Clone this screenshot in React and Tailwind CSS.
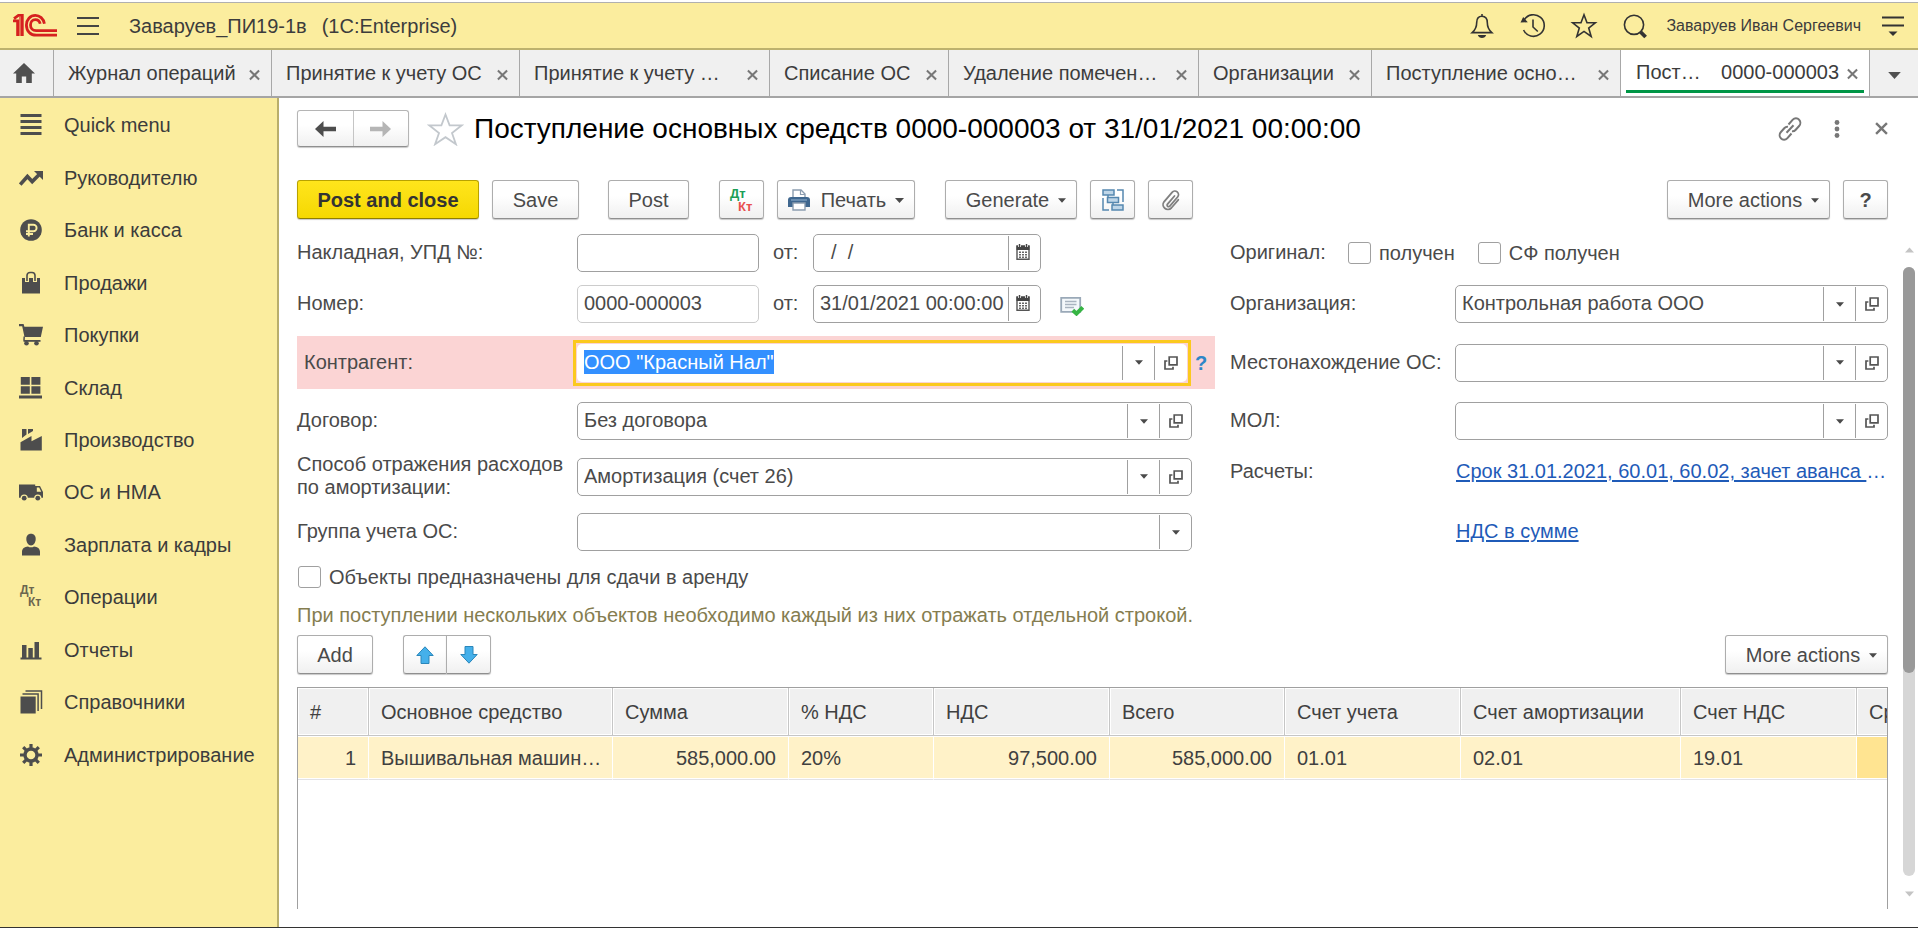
import { useEffect, useRef } from "react";

/* ---------- small shared icons ---------- */

function CloseIcon({ className = "h-3 w-[11px] text-[#777777]" }) {
  return (
    <svg viewBox="0 0 12 12" className={className} fill="none" stroke="currentColor" strokeWidth="2.2" aria-hidden="true">
      <path d="M1 1 11 11M11 1 1 11" />
    </svg>
  );
}

function Caret({ className = "h-[5px] w-[9px]" }) {
  return (
    <svg viewBox="0 0 9 5" className={className} fill="currentColor" aria-hidden="true">
      <path d="M0 0h9L4.5 5z" />
    </svg>
  );
}

function OpenIcon() {
  return (
    <svg viewBox="0 0 14 14" className="h-[14px] w-[14px]" fill="none" stroke="#555" strokeWidth="1.7" aria-hidden="true">
      <path d="M5.2 1h7.8v7.8H5.2z" />
      <path d="M3.4 5H1v8h8v-2.2" />
    </svg>
  );
}

function CalendarIcon() {
  return (
    <svg viewBox="0 0 14 16" className="h-4 w-[14px]" aria-hidden="true">
      <path d="M1 2h12v13.2H1z" fill="#fff" stroke="#555" strokeWidth="1.4" />
      <path d="M.5 1.8h13V6H.5z" fill="#444" />
      <path d="M3.5 0v3M10.5 0v3" stroke="#fff" strokeWidth="3" />
      <path d="M3.5 0v3M10.5 0v3" stroke="#444" strokeWidth="1.5" />
      <g fill="#666">
        <path d="M3 7.5h2v1.6H3zM6 7.5h2v1.6H6zM9 7.5h2v1.6H9zM3 10h2v1.6H3zM6 10h2v1.6H6zM9 10h2v1.6H9zM3 12.5h2V14H3zM6 12.5h2V14H6zM9 12.5h2V14H9z" />
      </g>
    </svg>
  );
}

function Logo() {
  return (
    <svg viewBox="0 0 44 23" className="h-[23px] w-11" fill="none" stroke="#d6201f" strokeWidth="2.8" role="img" aria-label="1C">
      <path d="M0 6.9h4.6V22M1 4.6 5.4 1.4h3.9V22" />
      <path d="M7 3v19" strokeWidth="1.2" />
      <path d="M31.4 9.8C30.6 4.6 26.6 1.4 22.4 1.4c-5.2 0-9 4.2-9 9.6 0 6.2 4.3 10.200 9.800 10.200H44" />
      <path d="M27.2 9.8c-.6-2.6-2.6-4.2-4.9-4.2-2.8 0-4.8 2.4-4.8 5.5 0 3.300 2.200 5.600 5.600 5.600H44" />
    </svg>
  );
}

/* ---------- sidebar icons ---------- */

const sideIcons = {
  menu: <path d="M1.5 1h21v3h-21zM1.5 7h21v3h-21zM1.5 13h21v3h-21zM1.5 19h21v3h-21z" />,
  trend: (
    <>
      <path d="M1.2 18.5 8.4 10.5 13.2 15.6 20.5 8.2" fill="none" stroke="currentColor" strokeWidth="3.6" />
      <path d="M15 5h9v9z" />
    </>
  ),
  ruble: (
    <>
      <circle cx="12" cy="12" r="10.8" />
      <path d="M9.8 18.5V6.8h4.6a3 3 0 0 1 0 6.4H7M7 16h7" fill="none" stroke="#fbed9e" strokeWidth="1.9" />
    </>
  ),
  bag: (
    <>
      <path d="M3 7h18v15.500H3z" />
      <path d="M8 11V4.500a3 3 0 0 1 3-3h2a3 3 0 0 1 3 3V11" fill="none" stroke="#fbed9e" strokeWidth="4" />
      <path d="M8 10V4.500a3 3 0 0 1 3-3h2a3 3 0 0 1 3 3V10" fill="none" stroke="currentColor" strokeWidth="1.6" />
    </>
  ),
  cart: (
    <>
      <path d="M0 1h4.600l.8 2.800H24L21.800 14H5.500L3.200 3.300H0z" />
      <path d="M4.500 17h17v1.800h-17z" />
      <path d="M5.200 13.500 5 17.500" stroke="currentColor" strokeWidth="1.500" />
      <circle cx="7.500" cy="20.300" r="2.300" />
      <circle cx="17.500" cy="20.300" r="2.300" />
    </>
  ),
  store: <path d="M1.800 1h9v7.800h-9zM12.400 1h9v7.800h-9zM1.800 10.300h9V17.800h-9zM12.400 10.300h9V17.800h-9zM0 19.500h23v3H0z" />,
  factory: (
    <path d="M1.500 22.500V14.200L12.500 8V13.200L22.800 8V22.500zM3 1h4.500v5.500L3 10zM9 1h5v2l-5 3z" />
  ),
  truck: (
    <>
      <path d="M0 4.500h16.200V17.800H0zM16.200 6h4.800L24 12v5.800h-7.800z" />
      <path d="M17.800 7.500h2.400l2 4.200h-4.400z" fill="#fbed9e" />
      <circle cx="5.200" cy="18" r="3.600" fill="#fbed9e" />
      <circle cx="18.800" cy="18" r="3.600" fill="#fbed9e" />
      <circle cx="5.200" cy="18.200" r="2.400" />
      <circle cx="18.800" cy="18.200" r="2.400" />
    </>
  ),
  person: (
    <>
      <path d="M12 .8c3 0 4.700 2.200 4.700 5.200S14.700 12.500 12 12.500 7.300 9 7.300 6 9 .8 12 .8z" />
      <path d="M3 22.500v-3.700c0-3.200 2.500-5.100 6-5.400 1.800 1.200 4.200 1.200 6 0 3.500.3 6 2.200 6 5.400v3.700z" />
    </>
  ),
  dtkt: (
    <g fontFamily="Liberation Sans, Arial, sans-serif" fontWeight="bold" fontSize="12" fill="#6b664f">
      <text x="1" y="9">Дт</text>
      <text x="9" y="21">Кт</text>
    </g>
  ),
  chart: <path d="M1.500 19.500h21v2h-21zM3 7h4.500v13H3zM9.300 10h4.500v10H9.300zM15.500 4h4.500v16h-4.500z" />,
  books: (
    <>
      <path d="M1.500 6.500h15.200V23.500H1.500z" />
      <path d="M3.500 4h15.600v17M6.500 1h16v18" fill="none" stroke="currentColor" strokeWidth="1.500" />
    </>
  ),
  gear: (
    <>
      <circle cx="12" cy="12" r="6" fill="none" stroke="currentColor" strokeWidth="3.400" />
      <path
        d="M12 1v4.500M12 18.500V23M1 12h4.500M18.500 12H23M4.200 4.200l3.200 3.200M16.600 16.600l3.200 3.200M19.800 4.200l-3.200 3.200M7.400 16.600l-3.200 3.200"
        stroke="currentColor"
        strokeWidth="3.200"
      />
    </>
  ),
};

const sections = [
  ["menu", "Quick menu"],
  ["trend", "Руководителю"],
  ["ruble", "Банк и касса"],
  ["bag", "Продажи"],
  ["cart", "Покупки"],
  ["store", "Склад"],
  ["factory", "Производство"],
  ["truck", "ОС и НМА"],
  ["person", "Зарплата и кадры"],
  ["dtkt", "Операции"],
  ["chart", "Отчеты"],
  ["books", "Справочники"],
  ["gear", "Администрирование"],
];

const tabs = [
  ["Журнал операций", "w-[218px]"],
  ["Принятие к учету ОС", "w-[248px]"],
  ["Принятие к учету …", "w-[250px]"],
  ["Списание ОС", "w-[179px]"],
  ["Удаление помечен…", "w-[250px]"],
  ["Организации", "w-[173px]"],
  ["Поступление осно…", "w-[249px]"],
];

/* ---------- header ---------- */

function HeaderButton({ label, children }) {
  return (
    <button type="button" aria-label={label} className="flex h-7 w-7 items-center justify-center text-[#333333]">
      {children}
    </button>
  );
}

function Header() {
  const line = { fill: "none", stroke: "currentColor", strokeWidth: 1.6, className: "h-7 w-7", viewBox: "0 0 28 28" };
  return (
    <header className="flex h-12 items-center border-t border-b-2 border-t-[#b0b0b0] border-b-[#bdb26d] bg-[#fbed9e] pr-[14px] pl-[13px]">
      <Logo />
      <button type="button" aria-label="Menu" className="ml-5 text-[#444444]">
        <svg viewBox="0 0 22 18" className="h-[18px] w-[22px]" stroke="currentColor" strokeWidth="2" aria-hidden="true">
          <path d="M0 1h22M0 9h22M0 17h22" />
        </svg>
      </button>
      <h1 className="ml-[30px] flex gap-[15px] whitespace-nowrap">
        <span>Заваруев_ПИ19-1в</span>
        <span>(1C:Enterprise)</span>
      </h1>
      <div className="ml-auto flex items-center gap-[23px]">
        <HeaderButton label="Notifications">
          <svg {...line}>
            <path d="M14 4.200c-3.700 0-5.300 2.900-5.300 6.300 0 5.200-1.600 7.600-4.500 10.100h19.600c-2.900-2.500-4.500-4.900-4.500-10.100 0-3.400-1.600-6.300-5.300-6.300zM14 2v2.200" />
            <path d="M9.800 23h8.400c-.6 1.900-2.200 3-4.200 3s-3.600-1.100-4.200-3z" fill="currentColor" stroke="none" />
          </svg>
        </HeaderButton>
        <HeaderButton label="History">
          <svg {...line}>
            <path d="M5 8.300A10.800 10.800 0 1 1 4.600 18" />
            <path d="M14 7.500V15l4.800 4.500" />
            <path d="M1.500 10.500 4.200 5l4.600 5.300z" fill="currentColor" stroke="none" />
          </svg>
        </HeaderButton>
        <HeaderButton label="Favorites">
          <svg {...line}>
            <path d="m14 2.800 3 8h8.300l-6.600 5.200 2.500 8.500-7.200-5.100-7.200 5.100L9.300 16l-6.600-5.200H11z" />
          </svg>
        </HeaderButton>
        <HeaderButton label="Search">
          <svg {...line}>
            <circle cx="13" cy="12.800" r="9.600" />
            <path d="m19.600 20 5 5" strokeWidth="3.800" />
          </svg>
        </HeaderButton>
      </div>
      <span className="ml-[17px] text-base whitespace-nowrap">Заваруев Иван Сергеевич</span>
      <button type="button" aria-label="Service menu" className="ml-[21px] text-[#333333]">
        <svg viewBox="0 0 22 20" className="h-5 w-[22px]" aria-hidden="true">
          <path d="M0 1.500h22M0 9.500h22" stroke="currentColor" strokeWidth="2" />
          <path d="M6.500 15.500h9L11 20z" fill="currentColor" />
        </svg>
      </button>
    </header>
  );
}

function TabBar() {
  return (
    <nav className="flex h-12 border-b-2 border-[#a5a5a5] bg-[#f0f0f0] text-[#3c3c3c]">
      <button type="button" aria-label="Home" className="flex w-[54px] shrink-0 items-center border-r border-[#a8a8a8] pl-[13px]">
        <svg viewBox="0 0 22 20" className="h-5 w-[22px]" fill="#505050" aria-hidden="true">
          <path d="M11 0 22 10.500h-3.200V20h-5.600v-6.500H8.800V20H3.200v-9.500H0z" />
        </svg>
      </button>
      {tabs.map(([label, width], i) => (
        <div key={i} className={`flex items-center justify-between border-r border-[#a8a8a8] pr-[11px] pl-[14px] ${width}`}>
          <button type="button" className="truncate">{label}</button>
          <button type="button" aria-label="Close tab" className="mt-[3px] shrink-0"><CloseIcon /></button>
        </div>
      ))}
      <div className="flex w-[249px] flex-col border-r border-[#a8a8a8] bg-white px-[5px]">
        <div className="flex flex-1 items-center pt-1 pr-[6px] pl-[10px]">
          <button type="button" className="flex flex-1 justify-between pr-2 whitespace-nowrap">
            <span>Пост…</span>
            <span>0000-000003</span>
          </button>
          <button type="button" aria-label="Close tab" className="mt-[3px]"><CloseIcon /></button>
        </div>
        <div className="mb-[3px] h-[3px] bg-[#009646]" />
      </div>
      <button type="button" aria-label="All tabs" className="flex flex-1 items-center justify-center pt-1 text-[#505050]">
        <Caret className="h-[7px] w-[13px]" />
      </button>
    </nav>
  );
}

function Sidebar() {
  return (
    <aside className="w-[279px] shrink-0 border-r-2 border-[#b9ae6b] bg-[#fbed9e] pt-px">
      <ul className="grid h-[682px] auto-rows-fr">
        {sections.map(([icon, label]) => (
          <li key={label} className="flex">
            <a href="#" className="flex flex-1 items-center gap-[21px] pl-[19px]">
              <svg viewBox="0 0 24 24" className="h-6 w-6 text-[#4d4d4d]" fill="currentColor" aria-hidden="true">
                {sideIcons[icon]}
              </svg>
              {label}
            </a>
          </li>
        ))}
      </ul>
    </aside>
  );
}

/* ---------- form pieces ---------- */

function Button({ className = "", children, ...rest }) {
  return (
    <button
      type="button"
      className={`flex h-[39px] items-center justify-center rounded-[3px] border border-[#adadad] border-b-[#8f8f8f] bg-linear-to-b from-white from-40% to-[#f0f0f0] whitespace-nowrap shadow-[0_1px_1px_#c8c8c8] ${className}`}
      {...rest}
    >
      {children}
    </button>
  );
}

function Field({ id, value = "", lookup, dropdown, calendar, bare, muted, inputRef, className = "" }) {
  const frame = bare ? "border-transparent" : muted ? "border-[#cccccc]" : "border-[#a0a0a0]";
  return (
    <div className={`flex h-[38px] rounded-[5px] border bg-white ${frame} ${className}`}>
      <input
        id={id}
        ref={inputRef}
        defaultValue={value}
        readOnly={muted}
        className="w-0 min-w-0 flex-1 rounded-[5px] bg-transparent pb-[2px] pl-[6px] whitespace-pre outline-none selection:bg-[#3390ff] selection:text-white"
      />
      {dropdown && (
        <button type="button" aria-label="Choose" className="my-px flex w-8 items-center justify-center border-l border-[#a0a0a0]">
          <Caret className="h-[5px] w-2" />
        </button>
      )}
      {lookup && (
        <button type="button" aria-label="Open" className="my-px flex w-8 items-center justify-center border-l border-[#a0a0a0]">
          <OpenIcon />
        </button>
      )}
      {calendar && (
        <button type="button" aria-label="Calendar" className="my-px flex w-8 items-center justify-center border-l border-[#a0a0a0] pr-[3px] pb-[2px]">
          <CalendarIcon />
        </button>
      )}
    </div>
  );
}

function Check({ label, className = "" }) {
  return (
    <label className={`flex items-center gap-[8px] whitespace-nowrap ${className}`}>
      <input type="checkbox" className="h-[22px] w-[23px] appearance-none rounded-[3px] border border-[#a0a0a0] bg-white" />
      {label}
    </label>
  );
}

function TitleRow() {
  return (
    <div className="flex items-center">
      <div className="flex h-[37px] w-28 rounded-[3px] border border-[#b5b5b5] border-b-[#8f8f8f] bg-linear-to-b from-white from-40% to-[#f0f0f0] shadow-[0_1px_1px_#c8c8c8]">
        <button type="button" aria-label="Back" className="flex flex-1 items-center justify-center border-r border-[#c5c5c5]">
          <svg viewBox="0 0 21 16" className="h-4 w-[21px]" fill="#4d4d4d" aria-hidden="true">
            <path d="M0 8 8.500 0v5.800H21v4.400H8.500V16z" />
          </svg>
        </button>
        <button type="button" aria-label="Forward" className="flex flex-1 items-center justify-center">
          <svg viewBox="0 0 21 16" className="h-4 w-[21px]" fill="#b5b5b5" aria-hidden="true">
            <path d="M21 8 12.500 0v5.800H0v4.400h12.500V16z" />
          </svg>
        </button>
      </div>
      <button type="button" aria-label="Add to favorites" className="ml-[18px]">
        <svg viewBox="0 0 37 34" className="h-[34px] w-[37px]" fill="none" stroke="#c3c8cd" strokeWidth="1.800" aria-hidden="true">
          <path d="m18.500 2.500 4.100 10.800h12.200l-9.800 7.700 3.900 11.200-10.400-7-10.400 7L12 21l-9.800-7.700h12.200z" />
        </svg>
      </button>
      <h2 className="ml-[10px] text-[28px] whitespace-nowrap text-black">
        Поступление основных средств 0000-000003 от 31/01/2021 00:00:00
      </h2>
      <div className="ml-auto flex items-center text-[#777777]">
        <button type="button" aria-label="Copy link">
          <svg viewBox="0 0 24 24" className="h-6 w-6" fill="none" stroke="currentColor" strokeWidth="2" aria-hidden="true">
            <path d="m10.500 7.500 4.300-4.800a4.200 4.200 0 0 1 6.300 0 4.600 4.600 0 0 1 0 6.300l-3.600 4a3.800 3.800 0 0 1-3.500 1.200" />
            <path d="m13.500 16.500-4.300 4.800a4.200 4.200 0 0 1-6.300 0 4.600 4.600 0 0 1 0-6.300l3.600-4a3.800 3.800 0 0 1 3.500-1.200" />
            <path d="m8.500 15.800 7-7.600" />
          </svg>
        </button>
        <button type="button" aria-label="More" className="ml-8">
          <svg viewBox="0 0 6 18" className="h-[18px] w-[6px]" fill="currentColor" aria-hidden="true">
            <circle cx="3" cy="2.500" r="2.400" />
            <circle cx="3" cy="9" r="2.400" />
            <circle cx="3" cy="15.500" r="2.400" />
          </svg>
        </button>
        <button type="button" aria-label="Close" className="ml-[35px]"><CloseIcon className="h-[13px] w-[13px]" /></button>
      </div>
    </div>
  );
}

function Toolbar() {
  return (
    <div className="mt-[33px] flex">
      <button
        type="button"
        className="h-[39px] w-[182px] rounded-[3px] border border-[#b8a200] border-b-[#8f7e00] bg-linear-to-b from-[#ffe51b] to-[#f5d800] font-bold whitespace-nowrap text-[#333333] shadow-[0_1px_1px_#c8c8c8]"
      >
        Post and close
      </button>
      <Button className="ml-[13px] w-[87px]">Save</Button>
      <Button className="ml-[29px] w-[81px]">Post</Button>
      <Button className="ml-[30px] w-[45px]" aria-label="Дт Кт">
        <svg viewBox="0 0 28 28" className="h-7 w-7 overflow-visible" fontFamily="Liberation Sans, Arial, sans-serif" fontWeight="bold" fontSize="13" aria-hidden="true">
          <text x="2" y="12" fill="#1d9e57">Дт</text>
          <text x="10" y="25" fill="#e8504f">Кт</text>
        </svg>
      </Button>
      <Button className="ml-[13px] w-[138px]">
        <svg viewBox="0 0 22 22" className="mr-[11px] h-[22px] w-[22px]" aria-hidden="true">
          <path d="M5 9V1h8l4 4v4" fill="#fff" stroke="#8c9db0" strokeWidth="1.400" />
          <path d="M12.500 1v4.500H17" fill="none" stroke="#8c9db0" strokeWidth="1.200" />
          <path d="M3 8h16a3 3 0 0 1 3 3v7H0v-7a3 3 0 0 1 3-3z" fill="#3f678f" />
          <path d="M3 11h16" stroke="#87a9c8" strokeWidth="1.200" />
          <path d="M5 14h12v7H5z" fill="#fff" stroke="#8c9db0" strokeWidth="1.400" />
        </svg>
        Печать
        <Caret className="mt-px ml-[9px] h-[5px] w-[9px]" />
      </Button>
      <Button className="ml-[30px] w-[132px] pl-[10px]">
        Generate
        <Caret className="mt-px ml-[9px] h-[5px] w-[8px]" />
      </Button>
      <Button className="ml-[13px] w-[45px]" aria-label="Document structure">
        <svg viewBox="0 0 22 22" className="h-[22px] w-[22px]" fill="#bfd6e8" stroke="#5688b0" strokeWidth="1.500" aria-hidden="true">
          <path d="M1 1h11v5H1zM5.500 8.500h11v5h-11zM10 16h11v5H10z" />
          <path d="M15 1h6v12M1 9v12h6M6 6v2.500M11 13.500V16" fill="none" />
        </svg>
      </Button>
      <Button className="ml-[13px] w-[45px]" aria-label="Attachments">
        <svg viewBox="0 0 20 22" className="h-[22px] w-5" fill="none" stroke="#808080" strokeWidth="1.800" strokeLinecap="round" aria-hidden="true">
          <path d="m13.500 7-7 8.200a1.500 1.500 0 0 0 2.300 2L16.600 8a3.600 3.600 0 0 0-5.500-4.700L3 12.800A4.800 4.800 0 0 0 10.300 19l7-8.200" />
        </svg>
      </Button>
      <Button className="ml-auto w-[163px] pl-[10px]">
        More actions
        <Caret className="mt-px ml-[9px] h-[5px] w-[8px]" />
      </Button>
      <Button className="ml-[13px] w-[45px] font-bold" aria-label="Help">?</Button>
    </div>
  );
}

function LeftFields() {
  const partner = useRef(null);
  useEffect(() => {
    partner.current.focus();
    partner.current.select();
  }, []);

  return (
    <div className="flex flex-col gap-[13px]">
      <div className="flex items-center">
        <label htmlFor="invoice" className="w-[280px] pb-[2px]">Накладная, УПД №:</label>
        <Field id="invoice" className="w-[182px]" />
        <label htmlFor="invoice-date" className="w-[54px] pb-[2px] pl-[14px]">от:</label>
        <Field id="invoice-date" value="  /  /" calendar className="w-[228px]" />
      </div>
      <div className="flex items-center">
        <label htmlFor="number" className="w-[280px] pb-[2px]">Номер:</label>
        <Field id="number" value="0000-000003" muted className="w-[182px]" />
        <label htmlFor="date" className="w-[54px] pb-[2px] pl-[14px]">от:</label>
        <Field id="date" value="31/01/2021 00:00:00" calendar className="w-[228px]" />
        <svg viewBox="0 0 24 20" className="mt-1 ml-[19px] h-5 w-6" aria-hidden="true">
          <path d="M1.200 1.800h19v14h-19z" fill="#f4f8fb" stroke="#9aa9b8" strokeWidth="1.800" />
          <path d="M5 5.500h11.500M5 8.500h11.500M5 11.500h9" stroke="#a9b4c0" strokeWidth="1.300" />
          <path d="m12.800 14.200 3.700 3.400 6.300-6.200" fill="none" stroke="#36b544" strokeWidth="4" />
        </svg>
      </div>
      <div className="flex h-[53px] items-center bg-[#fbd4d4] pl-[7px]">
        <label htmlFor="partner" className="w-[269px] pb-[2px]">Контрагент:</label>
        <div className="flex-1 border-[3px] border-[#fbc91e] px-px py-px">
          <Field id="partner" value={'ООО "Красный Нал"'} inputRef={partner} dropdown lookup bare />
        </div>
        <button type="button" aria-label="Help" className="w-6 pr-1 font-bold text-[#2e86c8]">?</button>
      </div>
      <div className="flex items-center">
        <label htmlFor="contract" className="w-[280px] pb-[2px]">Договор:</label>
        <Field id="contract" value="Без договора" dropdown lookup className="mr-[23px] flex-1" />
      </div>
      <div className="flex h-[47px] items-center">
        <label htmlFor="expense" className="w-[280px] pb-[2px] leading-[23px]">
          Способ отражения расходов<br />по амортизации:
        </label>
        <Field id="expense" value="Амортизация (счет 26)" dropdown lookup className="mr-[23px] flex-1" />
      </div>
      <div className="flex items-center">
        <label htmlFor="group" className="w-[280px] pb-[2px]">Группа учета ОС:</label>
        <Field id="group" dropdown className="mr-[23px] flex-1" />
      </div>
    </div>
  );
}

function RightFields() {
  return (
    <div className="flex flex-col gap-[13px]">
      <div className="flex h-[38px] items-center">
        <span className="w-[118px] pb-[2px]">Оригинал:</span>
        <Check label="получен" />
        <Check label="СФ получен" className="ml-[23px]" />
      </div>
      <div className="flex items-center">
        <label htmlFor="company" className="w-[225px] pb-[2px]">Организация:</label>
        <Field id="company" value="Контрольная работа ООО" dropdown lookup className="flex-1" />
      </div>
      <div className="flex h-[53px] items-center">
        <label htmlFor="location" className="w-[225px] pb-[2px] whitespace-nowrap">Местонахождение ОС:</label>
        <Field id="location" dropdown lookup className="flex-1" />
      </div>
      <div className="flex items-center">
        <label htmlFor="keeper" className="w-[225px] pb-[2px]">МОЛ:</label>
        <Field id="keeper" dropdown lookup className="flex-1" />
      </div>
      <div className="flex h-[47px] items-start pt-[6px]">
        <span className="w-[226px]">Расчеты:</span>
        <div className="flex whitespace-nowrap text-[#1f5bb8]">
          <a href="#" className="whitespace-pre underline decoration-2 underline-offset-2">{"Срок 31.01.2021, 60.01, 60.02, зачет аванса "}</a>
          <span>…</span>
        </div>
      </div>
      <div className="flex h-[38px] items-center pb-[2px] pl-[226px]">
        <a href="#" className="text-[#1f5bb8] underline decoration-2 underline-offset-2">НДС в сумме</a>
      </div>
    </div>
  );
}

const columns = [
  ["#", "w-[71px]", "1", true],
  ["Основное средство", "w-[244px]", "Вышивальная машин…"],
  ["Сумма", "w-[176px]", "585,000.00", true],
  ["% НДС", "w-[145px]", "20%"],
  ["НДС", "w-[176px]", "97,500.00", true],
  ["Всего", "w-[175px]", "585,000.00", true],
  ["Счет учета", "w-[176px]", "01.01"],
  ["Счет амортизации", "w-[220px]", "02.01"],
  ["Счет НДС", "w-[176px]", "19.01"],
  ["Срок", "w-[176px]", ""],
];

function AssetsTable() {
  return (
    <div className="mt-[13px] flex-1 overflow-hidden border border-b-0 border-[#a0a0a0]">
      <table className="w-[1735px] table-fixed border-separate border-spacing-0 text-[#404040]">
        <thead>
          <tr>
            {columns.map(([label, width], i) => (
              <th
                key={i}
                scope="col"
                className={`h-12 border-r border-b border-[#c6c6c6] bg-[#f0f0f0] px-3 text-left font-normal whitespace-nowrap shadow-[inset_0_0_0_1px_#ffffff] ${width}`}
              >
                {label}
              </th>
            ))}
          </tr>
        </thead>
        <tbody>
          <tr>
            {columns.map(([label, , value, right], i) => (
              <td
                key={label}
                className={`h-11 border-r border-r-white border-b border-b-[#e2e2e6] px-3 whitespace-nowrap shadow-[inset_0_-1px_0_#ffffff,inset_0_1px_0_#ffffff] ${right ? "text-right" : "text-left"} ${i === columns.length - 1 ? "bg-[#ffe491]" : "bg-[#fff2c8]"}`}
              >
                {value}
              </td>
            ))}
          </tr>
        </tbody>
      </table>
    </div>
  );
}

function TableToolbar() {
  return (
    <div className="mt-2 flex">
      <Button className="w-[76px]">Add</Button>
      <div className="ml-[30px] flex">
        <Button className="w-[43px] rounded-r-none border-r-0" aria-label="Move up">
          <svg viewBox="0 0 18 18" className="h-[18px] w-[18px]" fill="#45b0ea" stroke="#2a86ba" aria-hidden="true">
            <path d="M9 .8 17.200 9.500H13v8H5v-8H.8z" />
          </svg>
        </Button>
        <Button className="w-[45px] rounded-l-none" aria-label="Move down">
          <svg viewBox="0 0 18 18" className="h-[18px] w-[18px]" fill="#45b0ea" stroke="#2a86ba" aria-hidden="true">
            <path d="M9 17.200 17.200 8.500H13v-8H5v8H.8z" />
          </svg>
        </Button>
      </div>
      <Button className="ml-auto w-[163px] pl-[10px]">
        More actions
        <Caret className="mt-px ml-[9px] h-[5px] w-[8px]" />
      </Button>
    </div>
  );
}

function ScrollRail() {
  return (
    <div className="ml-[15px] flex w-3 shrink-0 flex-col items-center pt-[13px] pb-[12px] text-[#c4c4c4]" aria-hidden="true">
      <Caret className="h-[6px] w-[9px] rotate-180" />
      <div className="mt-[14px] mb-[15px] w-3 flex-1 rounded-full bg-[#d6d6d6]">
        <div className="h-2/3 rounded-full bg-[#999999]" />
      </div>
      <Caret className="h-[6px] w-[9px]" />
    </div>
  );
}

export default function App() {
  return (
    <div className="flex min-h-screen flex-col border-b border-[#333333] bg-white pt-[2px] font-['Liberation_Sans',Arial,sans-serif] text-[20px] leading-6 text-[#3c3c3c]">
      <Header />
      <TabBar />
      <div className="flex flex-1">
        <Sidebar />
        <main className="flex min-w-0 flex-1 flex-col pt-3 pr-[3px] pb-[18px] pl-[18px] text-[#4a4a4a]">
          <div className="pr-[27px]">
            <TitleRow />
            <Toolbar />
          </div>
          <div className="mt-[15px] flex flex-1">
            <form className="flex min-w-0 flex-1 flex-col" onSubmit={(e) => e.preventDefault()}>
              <div className="grid grid-cols-[918fr_658fr] gap-[15px]">
                <LeftFields />
                <RightFields />
              </div>
              <Check label="Объекты предназначены для сдачи в аренду" className="mt-[13px] h-[26px] pl-px" />
              <p className="mt-[13px] text-[#857d50]">
                При поступлении нескольких объектов необходимо каждый из них отражать отдельной строкой.
              </p>
              <TableToolbar />
              <AssetsTable />
            </form>
            <ScrollRail />
          </div>
        </main>
      </div>
    </div>
  );
}
